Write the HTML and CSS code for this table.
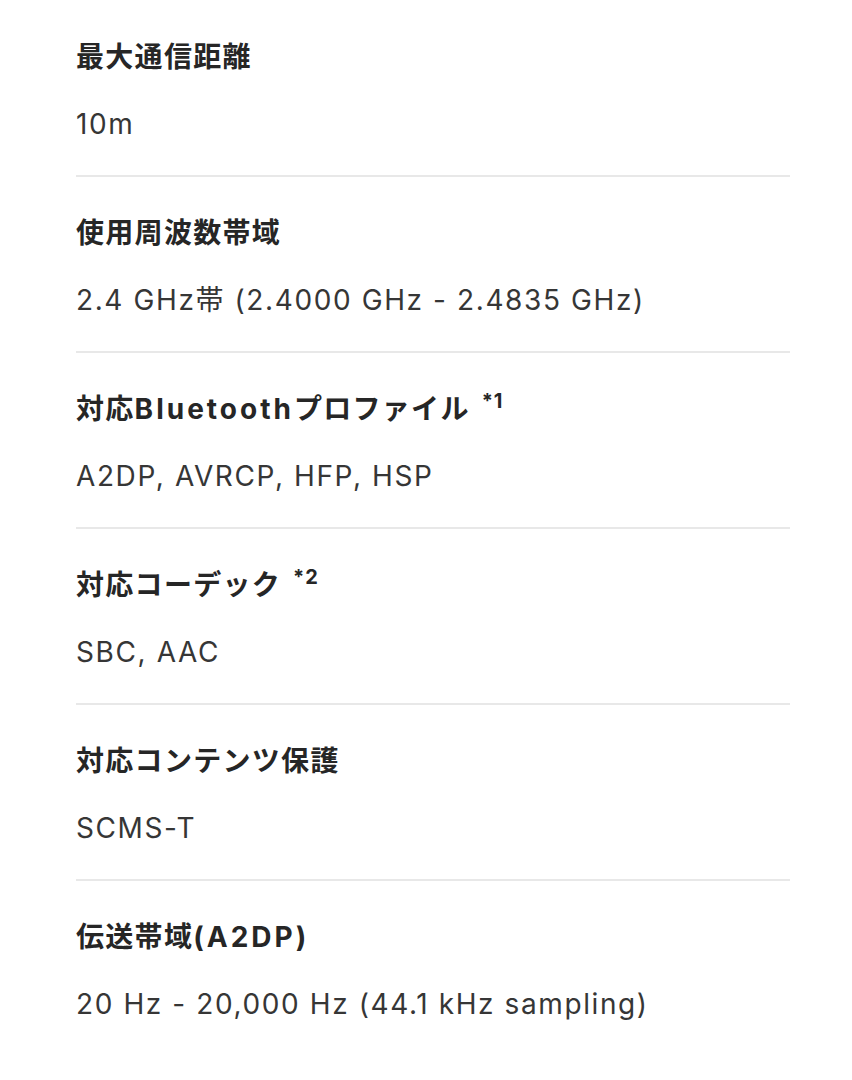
FILE: index.html
```html
<!DOCTYPE html>
<html lang="ja">
<head>
<meta charset="utf-8">
<link rel="stylesheet" href="styles.css">
</head>
<body>
<div class="specs">
  <section class="spec">
    <h3 class="spec-title">最大通信距離</h3>
    <p class="spec-value">10m</p>
  </section>
  <section class="spec">
    <h3 class="spec-title">使用周波数帯域</h3>
    <p class="spec-value">2.4 GHz帯 (2.4000 GHz - 2.4835 GHz)</p>
  </section>
  <section class="spec">
    <h3 class="spec-title">対応<span class="latin">Bluetooth</span>プロファイル <sup class="note">*1</sup></h3>
    <p class="spec-value">A2DP, AVRCP, HFP, HSP</p>
  </section>
  <section class="spec">
    <h3 class="spec-title">対応コーデック <sup class="note">*2</sup></h3>
    <p class="spec-value">SBC, AAC</p>
  </section>
  <section class="spec">
    <h3 class="spec-title">対応コンテンツ保護</h3>
    <p class="spec-value">SCMS-T</p>
  </section>
  <section class="spec last">
    <h3 class="spec-title">伝送帯域<span class="latin">(A2DP)</span></h3>
    <p class="spec-value">20 Hz - 20,000 Hz (44.1 kHz sampling)</p>
  </section>
</div>
</body>
</html>
```
FILE: styles.css
```css
html, body {
  margin: 0;
  padding: 0;
  background: #ffffff;
}
body {
  font-family: Inter, "Noto Sans CJK JP", sans-serif;
  color: #333333;
}
.specs {
  padding: 1px 62px 0 76px;
}
.spec {
  padding: 38px 0 33px;
  border-bottom: 2px solid #e8e8e8;
}
.spec.last {
  border-bottom: none;
}
.spec-title {
  margin: 0;
  font-size: 28px;
  line-height: 36px;
  font-weight: 700;
  letter-spacing: 1.3px;
  color: #262626;
}
.latin {
  letter-spacing: 3px;
}
.note {
  font-size: 20px;
  line-height: 0;
  letter-spacing: 1px;
  vertical-align: 11px;
  margin-left: 4px;
}
.spec-value {
  margin: 31px 0 0;
  font-size: 28px;
  line-height: 36px;
  letter-spacing: 1.6px;
  color: #363636;
}
```
